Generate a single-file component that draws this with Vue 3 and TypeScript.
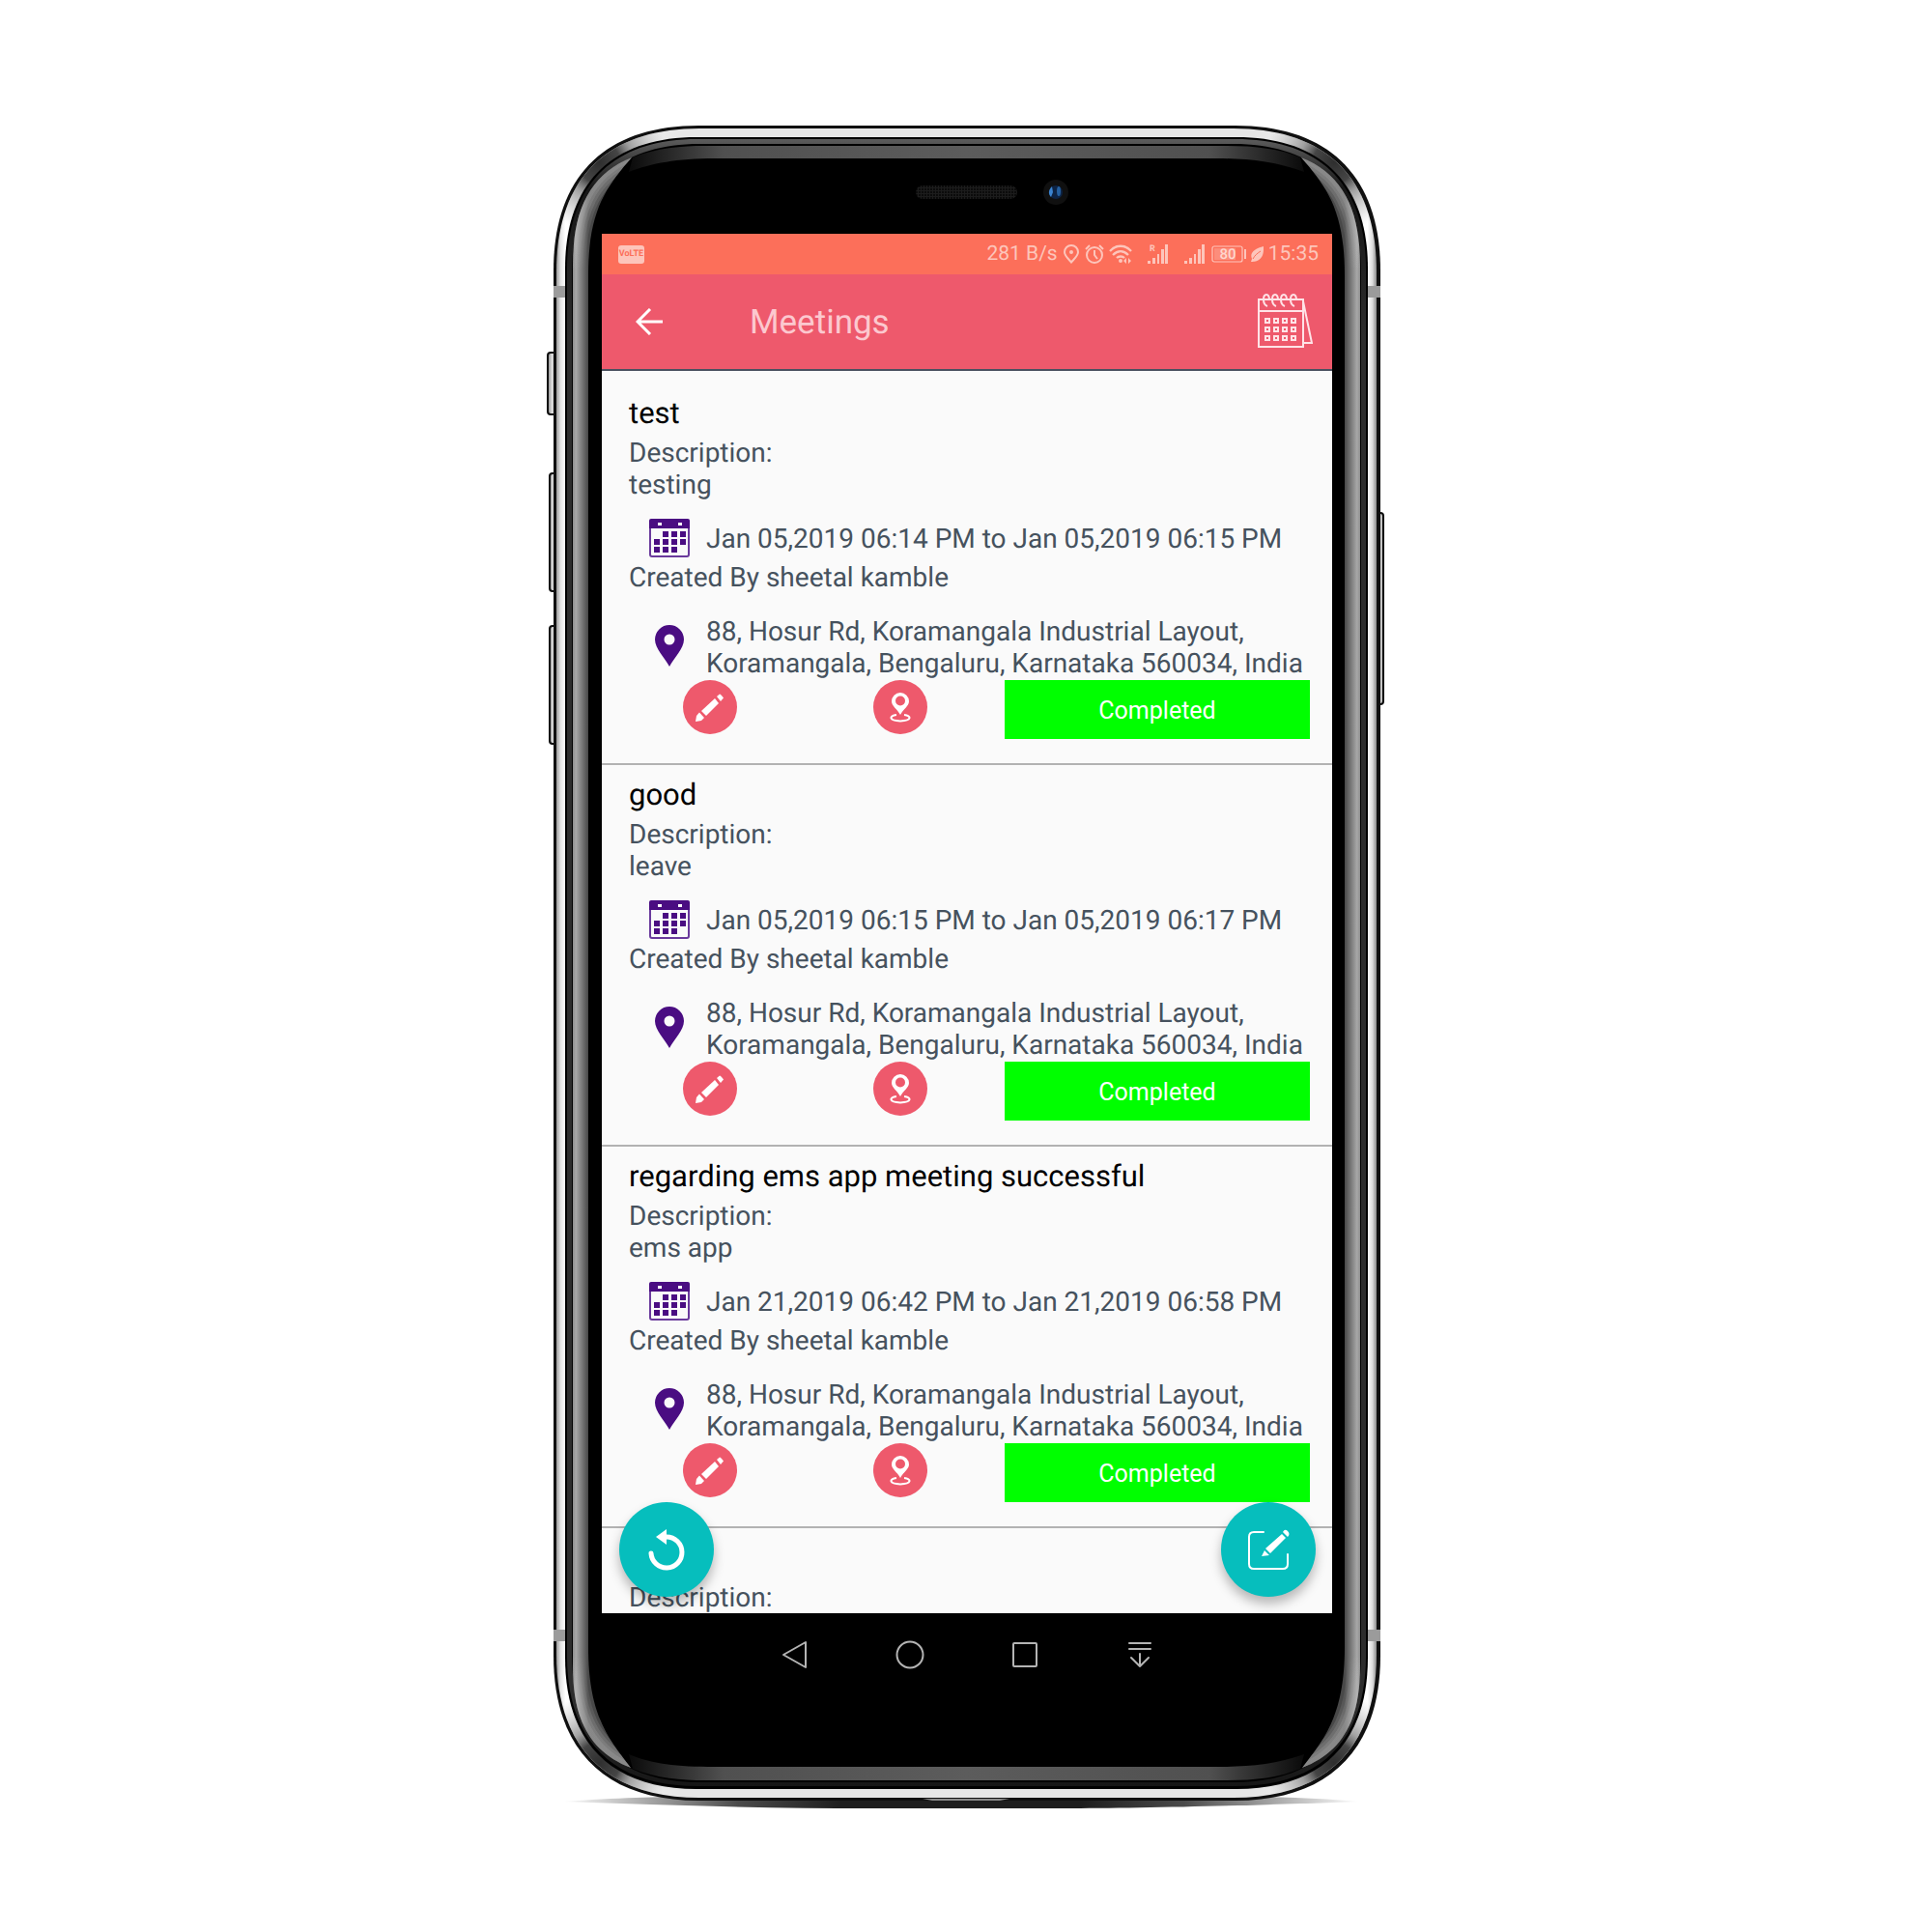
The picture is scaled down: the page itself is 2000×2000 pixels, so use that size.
<script setup lang="ts">
interface Meeting {
  title: string
  description: string
  period: string
  author: string
  address: string
  status: string
}

const address = '88, Hosur Rd, Koramangala Industrial Layout, Koramangala, Bengaluru, Karnataka 560034, India'

const meetings: Meeting[] = [
  { title: 'test', description: 'testing', period: 'Jan 05,2019 06:14 PM to Jan 05,2019 06:15 PM', author: 'sheetal kamble', address, status: 'Completed' },
  { title: 'good', description: 'leave', period: 'Jan 05,2019 06:15 PM to Jan 05,2019 06:17 PM', author: 'sheetal kamble', address, status: 'Completed' },
  { title: 'regarding ems app meeting successful', description: 'ems app', period: 'Jan 21,2019 06:42 PM to Jan 21,2019 06:58 PM', author: 'sheetal kamble', address, status: 'Completed' },
]

const calendarDots = [0, 1, 2].flatMap((row) => [0, 1, 2, 3].map((col) => ({ x: 8 + col * 9, y: 26 + row * 9 })))
const dateDots = [
  [1, 0], [2, 0], [3, 0],
  [0, 1], [1, 1], [2, 1], [3, 1],
  [0, 2], [1, 2], [2, 2],
].map(([col, row]) => ({ x: 5 + col * 9, y: 13 + row * 8 }))

// Outline of the handset body with its soft corners: k is the length of a corner.
function body(l: number, t: number, r: number, b: number, k: number): string {
  const near = Math.round(k * 0.35)
  return [
    `M${l} ${t + k}C${l} ${t + near} ${l + near} ${t} ${l + k} ${t}`,
    `H${r - k}C${r - near} ${t} ${r} ${t + near} ${r} ${t + k}`,
    `V${b - k}C${r} ${b - near} ${r - near} ${b} ${r - k} ${b}`,
    `H${l + k}C${l + near} ${b} ${l} ${b - near} ${l} ${b - k}Z`,
  ].join('')
}

const rim = body(576, 133, 1425, 1861, 148)
const corners = [
  { id: 'shade-tl', x: 620, y: 168 },
  { id: 'shade-tr', x: 1381, y: 168 },
  { id: 'shade-bl', x: 620, y: 1825 },
  { id: 'shade-br', x: 1381, y: 1825 },
]
const sideGlare = 'M593 1725V275C593 215 612 180 654 163C626 195 609 220 609 285V1705C609 1773 628 1798 653 1830C612 1814 593 1782 593 1725Z'
const glareEdges = ['M593 285C593 215 612 180 654 163', 'M593 1708C593 1778 612 1813 654 1830']
</script>

<template>
  <main class="stage">
    <div class="phone">
      <svg class="frame" viewBox="563 120 876 1760" preserveAspectRatio="none" aria-hidden="true">
        <defs>
          <linearGradient id="silver" x1="0" x2="1" y1="0" y2="0">
            <stop offset="0" stop-color="#9a9a9a" />
            <stop offset="0.005" stop-color="#e4e4e4" />
            <stop offset="0.011" stop-color="#ffffff" />
            <stop offset="0.15" stop-color="#e6e6e6" />
            <stop offset="0.85" stop-color="#e6e6e6" />
            <stop offset="0.989" stop-color="#ffffff" />
            <stop offset="0.995" stop-color="#dcdcdc" />
            <stop offset="1" stop-color="#8a8a8a" />
          </linearGradient>
          <radialGradient v-for="c in corners" :id="c.id" :key="c.id" gradientUnits="userSpaceOnUse" :cx="c.x" :cy="c.y" r="72">
            <stop offset="0" stop-color="#2e2e2e" />
            <stop offset="0.3" stop-color="#3c3c3c" stop-opacity="0.95" />
            <stop offset="0.5" stop-color="#6a6a6a" stop-opacity="0.6" />
            <stop offset="1" stop-color="#9a9a9a" stop-opacity="0" />
          </radialGradient>
          <linearGradient id="side" gradientUnits="userSpaceOnUse" x1="593" x2="609" y1="0" y2="0">
            <stop offset="0" stop-color="#8c8c8c" />
            <stop offset="0.2" stop-color="#a8a8a8" />
            <stop offset="1" stop-color="#484848" />
          </linearGradient>
          <linearGradient id="glare" gradientUnits="userSpaceOnUse" x1="0" x2="0" y1="163" y2="1830">
            <stop offset="0" stop-color="#c8c8c8" stop-opacity="0.16" />
            <stop offset="0.03" stop-color="#c8c8c8" stop-opacity="0.16" />
            <stop offset="0.07" stop-color="#c8c8c8" stop-opacity="0" />
            <stop offset="0.93" stop-color="#c8c8c8" stop-opacity="0" />
            <stop offset="0.97" stop-color="#c8c8c8" stop-opacity="0.16" />
            <stop offset="1" stop-color="#c8c8c8" stop-opacity="0.16" />
          </linearGradient>
          <linearGradient id="lip" x1="0" x2="1" y1="0" y2="0">
            <stop offset="0" stop-color="#0a0a0a" />
            <stop offset="0.14" stop-color="#505050" />
            <stop offset="0.5" stop-color="#5c5c5c" />
            <stop offset="0.86" stop-color="#505050" />
            <stop offset="1" stop-color="#0a0a0a" />
          </linearGradient>
          <linearGradient id="strip" x1="0" x2="0" y1="0" y2="1">
            <stop offset="0" stop-color="#5c5c5c" />
            <stop offset="0.03" stop-color="#161616" />
            <stop offset="0.12" stop-color="#2d2d2d" />
            <stop offset="0.95" stop-color="#2d2d2d" />
            <stop offset="1" stop-color="#161616" />
          </linearGradient>
          <linearGradient id="ground" x1="0" x2="1" y1="0" y2="0">
            <stop offset="0" stop-color="#1e1e1e" stop-opacity="0" />
            <stop offset="0.22" stop-color="#1e1e1e" stop-opacity="0.8" />
            <stop offset="0.35" stop-color="#1e1e1e" />
            <stop offset="0.65" stop-color="#1e1e1e" />
            <stop offset="0.78" stop-color="#1e1e1e" stop-opacity="0.8" />
            <stop offset="1" stop-color="#1e1e1e" stop-opacity="0" />
          </linearGradient>
          <linearGradient id="key" x1="0" x2="1" y1="0" y2="0">
            <stop offset="0" stop-color="#8a8a8a" />
            <stop offset="0.5" stop-color="#dedede" />
            <stop offset="1" stop-color="#9a9a9a" />
          </linearGradient>
          <pattern id="mesh" width="3" height="3" patternUnits="userSpaceOnUse">
            <rect width="3" height="3" fill="#1c1c1c" />
            <rect width="2" height="2" fill="#0b0b0b" />
          </pattern>
          <clipPath id="glare-clip"><path :d="sideGlare" /></clipPath>
        </defs>

        <path d="M582 1865C640 1861 680 1860 720 1860H1280C1320 1860 1360 1861 1408 1865C1300 1869 1180 1872 1100 1872H900C800 1872 690 1869 582 1865Z" fill="url(#ground)" />

        <g stroke="#0c0c0c" stroke-width="2" fill="url(#key)">
          <rect x="567" y="365" width="9" height="64" rx="3" />
          <rect x="569" y="490" width="7" height="122" rx="3" />
          <rect x="569" y="648" width="7" height="122" rx="3" />
          <rect x="1426" y="531" width="6" height="198" rx="3" />
        </g>

        <path :d="body(573, 130, 1429, 1864, 150)" fill="#101010" />
        <path :d="rim" fill="url(#silver)" />
        <path v-for="c in corners" :key="c.id" :d="rim" :fill="`url(#${c.id})`" />
        <g fill="#9b9b9b">
          <rect x="573" y="296" width="13" height="12" />
          <rect x="1415" y="296" width="14" height="12" />
          <rect x="573" y="1687" width="13" height="12" />
          <rect x="1415" y="1687" width="14" height="12" />
        </g>
        <path :d="body(585, 142, 1416, 1852, 136)" fill="#000000" />
        <path :d="body(587, 144, 1414, 1849, 135)" fill="url(#strip)" />
        <path :d="body(592, 149, 1409, 1845, 132)" fill="#000000" />
        <path d="M651 178L655 163C680 153 705 151 730 151H1270C1300 151 1325 154 1346 163L1350 178C1320 167 1290 164 1260 164H740C700 164 675 169 651 178Z" fill="url(#lip)" />
        <path d="M651 1816L655 1831C680 1841 705 1843 730 1843H1270C1300 1843 1325 1840 1346 1831L1350 1816C1320 1827 1290 1829 1260 1829H740C700 1829 675 1826 651 1816Z" fill="url(#lip)" />
        <g v-for="side in ['', 'matrix(-1 0 0 1 2001 0)']" :key="side" :transform="side || undefined">
          <path :d="sideGlare" fill="url(#side)" />
          <g clip-path="url(#glare-clip)" fill="none" stroke="url(#glare)">
            <template v-for="edge in glareEdges" :key="edge">
              <path v-for="w in [8, 14, 20, 26]" :key="w" :d="edge" :stroke-width="w" />
            </template>
          </g>
        </g>
        <path d="M955 1862H1045L1035 1864H965Z" fill="#8a8a8a" />

        <rect x="948" y="192" width="105" height="14" rx="7" fill="url(#mesh)" />
        <circle cx="1093" cy="199" r="13" fill="#101010" />
        <circle cx="1093" cy="199" r="7" fill="#0d2344" />
        <path d="M1089 193C1085 197 1085 201 1088 204L1090 199Z" fill="#3b83cf" />
        <ellipse cx="1096" cy="198" rx="2" ry="5" fill="#245f9f" />
      </svg>

      <div class="screen">
        <div class="status-bar">
          <span class="volte">VoLTE</span>
          <div class="status-right">
            <span>281 B/s</span>
            <svg width="18" height="22" viewBox="0 0 18 22" fill="none" stroke="currentColor" stroke-width="2">
              <path d="M9 19.500C5 15 2 12.500 2 9a7 7 0 0 1 14 0C16 12.500 13 15 9 19.500Z" />
              <circle cx="9" cy="9" r="2" fill="currentColor" stroke="none" />
            </svg>
            <svg width="20" height="22" viewBox="0 0 20 22" fill="none" stroke="currentColor" stroke-width="2">
              <circle cx="10" cy="12" r="8" />
              <path d="M10 7V12L13 16M1 6L5 2M19 6L15 2" />
            </svg>
            <svg width="24" height="22" viewBox="0 0 24 22" fill="none" stroke="currentColor" stroke-width="2.300">
              <path d="M1 8C7 1 17 1 23 8M4 12C9 7 15 7 20 12M8 15C10 13 14 13 16 15" />
              <circle cx="12" cy="18" r="2" fill="currentColor" stroke="none" />
              <path d="M18 15V21L15 18ZM20 15V21L23 18Z" fill="currentColor" stroke="none" />
            </svg>
            <svg class="signal" width="22" height="22" viewBox="0 0 22 22" fill="currentColor">
              <path d="M0 18h3v3H0zM5 15h3v6H5zM10 11h2v10h-2zM14 6h3v15h-3zM18 1h3v20h-3z" />
              <text x="2" y="8" font-size="9" font-weight="bold">R</text>
            </svg>
            <svg class="signal" width="22" height="22" viewBox="0 0 22 22" fill="currentColor">
              <path d="M0 18h3v3H0zM5 15h3v6H5zM10 11h2v10h-2zM14 6h3v15h-3zM18 1h3v20h-3z" />
            </svg>
            <svg width="37" height="22" viewBox="0 0 37 22" fill="none">
              <rect x="2" y="3" width="31" height="16" rx="2" stroke="currentColor" stroke-width="1.200" />
              <rect x="4" y="5" width="22" height="12" fill="currentColor" opacity="0.35" />
              <path d="M35 6h2v10h-2z" fill="currentColor" />
              <text x="18" y="16" font-size="15" font-weight="500" text-anchor="middle" fill="#ffd6ce">80</text>
            </svg>
            <svg width="13" height="22" viewBox="0 0 13 22">
              <path d="M13 3C5 5 -2 9 1 16L0 19C5 19 14 18 13 3Z" fill="currentColor" />
              <path d="M2 16C4 12 7 10 10 8" fill="none" stroke="#fc6f5a" />
            </svg>
            <time>15:35</time>
          </div>
        </div>

        <header class="app-bar">
          <button class="icon-button" type="button" aria-label="Back">
            <svg width="28" height="28" viewBox="0 0 28 28" fill="none" stroke="#ffffff" stroke-width="3">
              <path d="M28 14H2M15 1L2 14L15 27" />
            </svg>
          </button>
          <h1>Meetings</h1>
          <button class="icon-button" type="button" aria-label="Calendar">
            <svg width="57" height="58" viewBox="0 0 57 58" fill="none" stroke="#ffe3e7" stroke-width="2">
              <path d="M1 6H47V55H1ZM1 18H47M47 8L56 51H47" />
              <path v-for="x in [6, 15, 24, 34]" :key="x" d="M0 6C0 1 2 1 3 1C5 1 6 3 6 7M0 6C0 10 1 12 4 13" :transform="`translate(${x} 0)`" />
              <rect v-for="(dot, i) in calendarDots" :key="i" :x="dot.x" :y="dot.y" width="4" height="4" />
            </svg>
          </button>
        </header>

        <div class="body">
          <ul class="list">
            <li v-for="(meeting, index) in meetings" :key="index" class="meeting">
              <h2>{{ meeting.title }}</h2>
              <p>Description:</p>
              <p>{{ meeting.description }}</p>
              <div class="row date">
                <svg width="42" height="41" viewBox="0 0 42 41">
                  <rect x="1" y="2" width="40" height="37" rx="2" fill="#fafafa" stroke="#6a3a9c" stroke-width="2" />
                  <path d="M0 2Q0 0 2 0H40Q42 0 42 2V10H0Z" fill="#4a0d82" />
                  <rect x="9" y="4" width="4" height="3" fill="#ffffff" />
                  <rect x="30" y="4" width="4" height="3" fill="#ffffff" />
                  <rect v-for="(dot, i) in dateDots" :key="i" :x="dot.x" :y="dot.y" width="6" height="6" fill="#4a0d82" />
                </svg>
                <p>{{ meeting.period }}</p>
              </div>
              <p>Created By {{ meeting.author }}</p>
              <div class="row place">
                <svg width="42" height="46" viewBox="0 0 42 46">
                  <path fill-rule="evenodd" fill="#4a0d82" d="M21 43C16 34 6 24 6 15a15 15 0 0 1 30 0C36 24 26 34 21 43ZM21 9.500a5.500 5.500 0 1 0 0 11a5.500 5.500 0 0 0 0-11Z" />
                </svg>
                <p>{{ meeting.address }}</p>
              </div>
              <div class="actions">
                <button class="round" type="button" aria-label="Edit meeting">
                  <svg width="56" height="56" viewBox="0 0 56 56" fill="#ffffff">
                    <path d="M35 17L38 14.500Q39 14.500 42 18.500L39 22Z" />
                    <path d="M33 19L37 24L24 37L19 32Z" />
                    <path d="M17 33.500L22 39L19 42L13 43L14 37Z" />
                  </svg>
                </button>
                <button class="round" type="button" aria-label="Show on map">
                  <svg width="56" height="56" viewBox="0 0 56 56">
                    <path fill-rule="evenodd" fill="#ffffff" d="M28 36C25 30 19 27 19 22a9 9 0 0 1 18 0C37 27 31 30 28 36ZM28 16.500a5 5 0 1 0 0 10a5 5 0 0 0 0-10Z" />
                    <path d="M24 36C16 37 16 42 28 42.500C40 42 40 37 32 36" fill="none" stroke="#ffffff" stroke-width="2" />
                  </svg>
                </button>
                <button class="state" type="button">{{ meeting.status }}</button>
              </div>
            </li>
            <li class="meeting upcoming">
              <h2></h2>
              <p>Description:</p>
            </li>
          </ul>

          <button class="fab refresh" type="button" aria-label="Refresh">
            <svg width="98" height="98" viewBox="0 0 98 98">
              <path d="M33 53A16 16 0 1 0 49 36" fill="none" stroke="#ffffff" stroke-width="5" stroke-linecap="round" />
              <path d="M38 36L49 28V44Z" fill="#ffffff" />
            </svg>
          </button>
          <button class="fab compose" type="button" aria-label="New meeting">
            <svg width="98" height="98" viewBox="0 0 98 98">
              <path d="M44 31H34Q29 31 29 36V64Q29 69 34 69H64Q69 69 69 64V54" fill="none" stroke="#ffffff" stroke-width="2" stroke-linecap="round" />
              <path d="M63 33L67 37L51 53L46 48ZM45 50L50 55L42 56ZM64 31Q66 27 69 30Q72 33 69 36Z" fill="#ffffff" />
            </svg>
          </button>
        </div>
      </div>

      <nav class="nav-bar">
        <button class="icon-button" type="button" aria-label="Back">
          <svg width="30" height="30" viewBox="0 0 30 30"><path d="M26 2V28L3 15Z" /></svg>
        </button>
        <button class="icon-button" type="button" aria-label="Home">
          <svg width="30" height="30" viewBox="0 0 30 30"><circle cx="15" cy="15" r="13.500" /></svg>
        </button>
        <button class="icon-button" type="button" aria-label="Recent apps">
          <svg width="30" height="30" viewBox="0 0 30 30"><rect x="3" y="3" width="24" height="24" rx="1" /></svg>
        </button>
        <button class="icon-button" type="button" aria-label="Notifications">
          <svg width="30" height="30" viewBox="0 0 30 30"><path d="M4 3H26M4 9H26M15 14V27M6 18L15 27L24 18" /></svg>
        </button>
      </nav>
    </div>
  </main>
</template>

<style>
body {
  margin: 0;
  background: #ffffff;
}
</style>

<style scoped>
.stage {
  box-sizing: border-box;
  display: flex;
  justify-content: center;
  height: 100vh;
  min-height: 900px;
  padding: 130px 16px 130px 18px;
  font-family: Roboto, 'Liberation Sans', sans-serif;
  text-rendering: geometricPrecision;
}

.phone {
  position: relative;
  box-sizing: border-box;
  display: flex;
  flex-direction: column;
  width: 100%;
  max-width: 856px;
  padding: 112px 50px 114px;
}

.frame {
  position: absolute;
  inset: -10px;
  width: calc(100% + 20px);
  height: calc(100% + 20px);
}

.screen {
  position: relative;
  display: flex;
  flex: 1;
  flex-direction: column;
  min-height: 0;
  background: #fafafa;
}

h1,
h2,
p,
ul {
  margin: 0;
  padding: 0;
  font-weight: 400;
}

button {
  padding: 0;
  border: 0;
  background: none;
  font-family: inherit;
  cursor: pointer;
}

svg {
  display: block;
  flex: none;
}

.status-bar {
  display: flex;
  align-items: center;
  justify-content: space-between;
  height: 42px;
  padding: 0 14px 0 17px;
  background: #fc6f5a;
  color: #fdc5bb;
}

.volte {
  width: 27px;
  border-radius: 3px;
  background: #fdc5bb;
  color: #fc6f5a;
  font-size: 9px;
  font-weight: 700;
  line-height: 19px;
  text-align: center;
}

.status-right {
  display: flex;
  align-items: center;
  gap: 5px;
  font-size: 21px;
  line-height: 26px;
  white-space: nowrap;
}

.signal {
  margin-left: 11px;
}

.app-bar {
  display: flex;
  align-items: center;
  height: 98px;
  padding: 0 20px 0 35px;
  border-bottom: 2px solid #4a5160;
  background: #ee596c;
}

.app-bar h1 {
  flex: 1;
  padding: 2px 0 0 90px;
  color: #fcc8cf;
  font-size: 35px;
  line-height: 40px;
}

.body {
  position: relative;
  flex: 1;
  min-height: 0;
}

.list {
  box-sizing: border-box;
  height: 100%;
  padding-top: 13px;
  overflow: hidden;
  list-style: none;
}

.meeting {
  padding: 12px 23px 25px 28px;
  border-bottom: 2px solid #b2b2b2;
  color: #46525e;
  font-size: 28px;
  line-height: 33px;
}

.upcoming {
  padding-bottom: 0;
  border-bottom: 0;
}

.meeting h2 {
  min-height: 37px;
  margin-bottom: 6px;
  color: #000000;
  font-size: 31px;
  line-height: 37px;
}

.row {
  display: flex;
  align-items: center;
  gap: 17px;
  padding-left: 21px;
}

.date {
  height: 43px;
  margin: 18px 0 2px;
}

.place {
  margin: 23px 0 1px;
}

.actions {
  display: grid;
  grid-template-columns: 197px 136px 1fr;
  padding-left: 56px;
}

.round {
  width: 56px;
  height: 56px;
  border-radius: 50%;
  background: #ee596c;
}

.state {
  height: 61px;
  padding-top: 2px;
  background: #00ff00;
  color: #ffffff;
  font-size: 25px;
  line-height: 30px;
}

.fab {
  position: absolute;
  bottom: 17px;
  width: 98px;
  height: 98px;
  border-radius: 50%;
  background: #06bebd;
  box-shadow: 0 7px 12px rgba(0, 0, 0, 0.28);
}

.refresh {
  left: 18px;
}

.compose {
  right: 17px;
}

.nav-bar {
  position: relative;
  display: flex;
  align-items: center;
  justify-content: center;
  gap: 89px;
  height: 86px;
}

.nav-bar svg {
  fill: none;
  stroke: #b4b4b4;
  stroke-width: 2;
  stroke-linecap: round;
  stroke-linejoin: round;
}
</style>
